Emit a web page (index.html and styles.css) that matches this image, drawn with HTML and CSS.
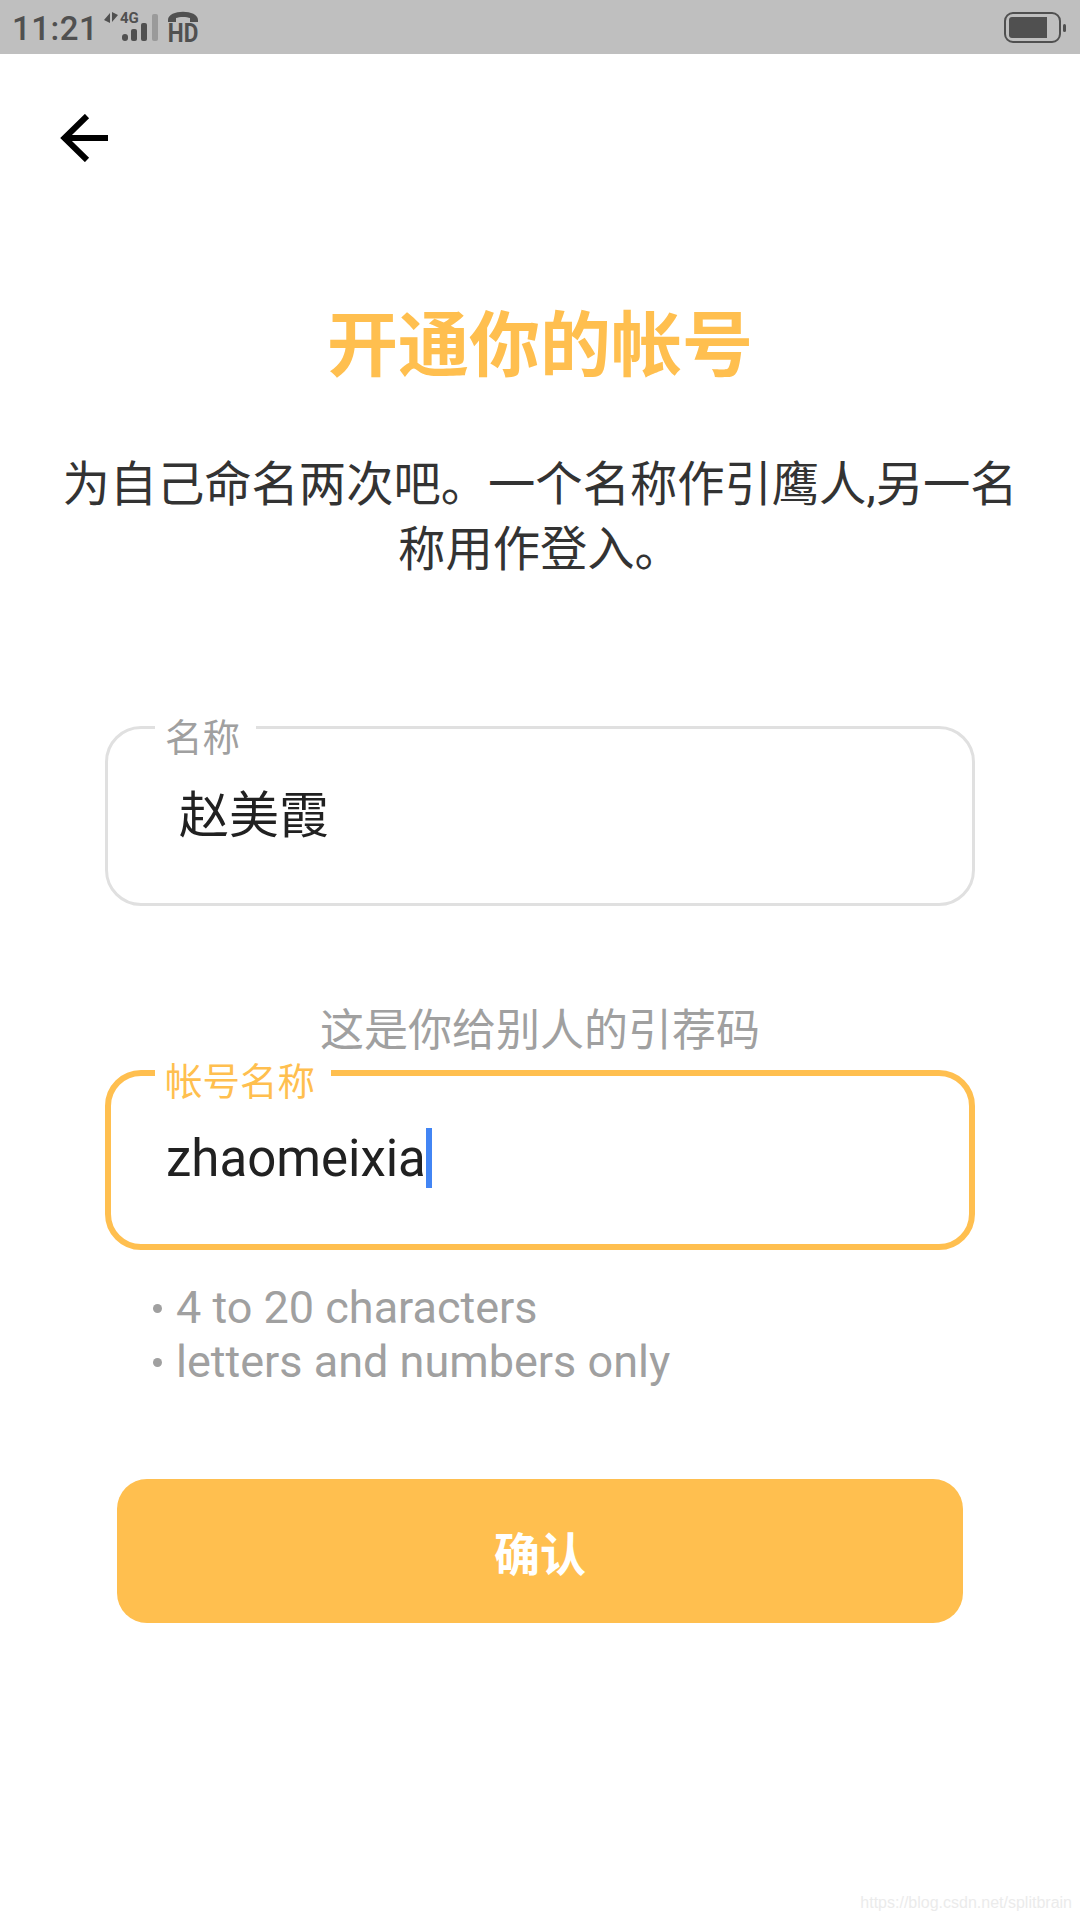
FILE: index.html
```html
<!DOCTYPE html>
<html lang="zh-CN">
<head>
    <meta charset="UTF-8">
    <meta name="viewport" content="width=device-width, initial-scale=1.0">
    <title>开通你的帐号</title>
    <link rel="stylesheet" href="styles.css">
</head>
<body>

<div class="status-bar">
    <div class="status-left">
        <span class="clock">11:21</span>
        <svg class="signal" width="56" height="40" viewBox="0 0 56 40">
            <path d="M7 6v10L1 13zM9 5v10l6-7z" fill="#505050"/>
            <text x="17" y="16" class="signal-text">4G</text>
            <rect x="19" y="27" width="6" height="7" rx="3" fill="#505050"/>
            <rect x="28" y="22" width="6" height="12" rx="2" fill="#505050"/>
            <rect x="38" y="16" width="6" height="18" rx="2" fill="#505050"/>
            <rect x="49" y="7" width="6" height="27" rx="2" fill="#9a9a9a"/>
        </svg>
        <svg class="hd" width="36" height="40" viewBox="0 0 36 40">
            <path d="M2 15v-2C2 2 32 2 32 13v2h-8v-4c-3-1.500-11-1.500-14 0v4H2z" fill="#505050"/>
            <text class="hd-text" transform="translate(17 35) scale(.9 1)">HD</text>
        </svg>
    </div>
    <div class="battery">
        <div class="battery-body"><div class="battery-fill"></div></div>
        <div class="battery-tip"></div>
    </div>
</div>

<div class="page">
    <button class="back" type="button">
        <svg width="48" height="48" viewBox="0 0 48 48">
            <path d="M48 24H4M27 2L4.500 24 27 46" fill="none" stroke="#000" stroke-width="6"/>
        </svg>
    </button>

    <h1>开通你的帐号</h1>
    <p class="intro">为自己命名两次吧。一个名称作引鹰人,另一名称用作登入。</p>

    <div class="field name-field">
        <label>名称</label>
        <div class="value value-cn">赵美霞</div>
    </div>

    <p class="note">这是你给别人的引荐码</p>

    <div class="field active">
        <label>帐号名称</label>
        <div class="value">zhaomeixia<span class="caret"></span></div>
    </div>

    <ul class="rules">
        <li>4 to 20 characters</li>
        <li>letters and numbers only</li>
    </ul>

    <button class="confirm" type="button">确认</button>
</div>

<div class="watermark">https://blog.csdn.net/splitbrain</div>

</body>
</html>
```

FILE: styles.css
```css
* {
    margin: 0;
    padding: 0;
    box-sizing: border-box;
}

body {
    width: 1080px;
    height: 1920px;
    position: relative;
    overflow: hidden;
    background-color: #fff;
    font-family: Roboto, "Noto Sans CJK SC", sans-serif;
    color: #212121;
}

.status-bar {
    height: 54px;
    background-color: #bfbfbf;
    display: flex;
    justify-content: space-between;
    align-items: center;
    padding: 0 14px 0 12px;
    color: #505050;
}

.status-left {
    display: flex;
    align-items: center;
}

.clock {
    width: 84px;
    font-size: 33px;
    font-weight: 500;
    letter-spacing: 0.5px;
    margin-top: 2px;
    white-space: nowrap;
}

.signal {
    margin: 0 0 0 7px;
}

.signal-text {
    font-size: 15px;
    font-weight: 700;
    fill: #505050;
}

.hd {
    margin: 0 0 0 7px;
}

.hd-text {
    font-size: 25px;
    font-weight: 700;
    fill: #505050;
    text-anchor: middle;
}

.battery {
    display: flex;
    align-items: center;
    gap: 2px;
    margin-top: 1px;
}

.battery-body {
    width: 57px;
    height: 31px;
    border: 2px solid #505050;
    border-radius: 9px;
    padding: 3px;
}

.battery-fill {
    width: 38px;
    height: 100%;
    background-color: #505050;
    border-radius: 3px 0 0 3px;
}

.battery-tip {
    width: 3px;
    height: 8px;
    background-color: #505050;
    border-radius: 2px;
}

.page {
    display: flex;
    flex-direction: column;
    align-items: center;
    padding: 0 60px;
}

.back {
    align-self: flex-start;
    border: none;
    background: none;
    margin-top: 60px;
    display: block;
}

.back svg {
    display: block;
}

h1 {
    margin-top: 134px;
    font-size: 71px;
    line-height: 100px;
    font-weight: 700;
    color: #ffbf4f;
}

.intro {
    margin-top: 57px;
    font-size: 47.3px;
    line-height: 65px;
    text-align: center;
    color: #333;
}

.field {
    position: relative;
    width: 870px;
    height: 180px;
    border: 3px solid #e0e0e0;
    border-radius: 36px;
    padding: 0 56px;
    flex-shrink: 0;
}

.name-field {
    margin-top: 143px;
}

.field label {
    position: absolute;
    left: 47px;
    top: -10px;
    padding: 0 16px 0 10px;
    background-color: #fff;
    font-size: 37.5px;
    line-height: 38px;
    color: #a0a0a0;
}

.value {
    font-size: 51px;
    line-height: 60px;
    padding-top: 52px;
}

.value-cn {
    font-size: 50px;
    padding: 57px 0 0 15px;
}

.note {
    margin-top: 95px;
    font-size: 44px;
    line-height: 60px;
    color: #a0a0a0;
}

.active {
    margin-top: 9px;
    border: 6px solid #ffbf4f;
}

.active label {
    top: -13px;
    left: 44px;
    color: #ffbf4f;
}

.active .value {
    margin-left: -1px;
}

.caret {
    display: inline-block;
    width: 6px;
    height: 60px;
    background-color: #4285f4;
    vertical-align: -12px;
}

.rules {
    align-self: flex-start;
    margin: 31px 0 0 88px;
    list-style: none;
    font-size: 45px;
    line-height: 54px;
    color: #a0a0a0;
}

.rules li {
    display: flex;
    align-items: center;
}

.rules li::before {
    content: "";
    width: 9px;
    height: 9px;
    margin: 0 14px 0 5px;
    border-radius: 50%;
    background-color: #a0a0a0;
}

.confirm {
    margin-top: 90px;
    width: 846px;
    height: 144px;
    border: none;
    border-radius: 30px;
    background-color: #ffbf4f;
    color: #fff;
    font-family: inherit;
    font-size: 46px;
    font-weight: 700;
}

.watermark {
    position: absolute;
    right: 8px;
    bottom: 8px;
    font-family: "Liberation Sans", sans-serif;
    font-size: 16px;
    color: #ebebeb;
}
```
